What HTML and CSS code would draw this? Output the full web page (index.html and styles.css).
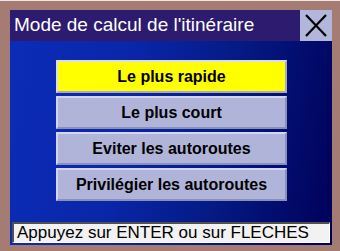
FILE: index.html
```html
<!DOCTYPE html>
<html>
<head>
<meta charset="utf-8">
<link rel="stylesheet" href="styles.css">
</head>
<body>
<div class="frame">
  <div class="titlebar">
    <div class="title">Mode de calcul de l'itinéraire</div>
    <div class="close">
      <svg width="32" height="31" viewBox="0 0 32 31"><path d="M6 5 L26 26 M26 5 L6 26" stroke="#000" stroke-width="2.2" fill="none"/></svg>
    </div>
  </div>
  <div class="panel">
    <div class="menu">
      <div class="btn selected">Le plus rapide</div>
      <div class="btn">Le plus court</div>
      <div class="btn">Eviter les autoroutes</div>
      <div class="btn">Privilégier les autoroutes</div>
    </div>
    <div class="status">Appuyez sur ENTER ou sur FLECHES</div>
  </div>
</div>
</body>
</html>
```
FILE: styles.css
```css
html, body {
  margin: 0;
  padding: 0;
}
body {
  width: 340px;
  height: 251px;
  background: #a57c74;
  font-family: "Liberation Sans", Arial, sans-serif;
  overflow: hidden;
}
.frame {
  padding: 9px 8px 6px 10px;
  border-top: 1px solid #efe6e4;
  box-sizing: border-box;
  height: 251px;
  display: flex;
  flex-direction: column;
}
.titlebar {
  height: 31px;
  background: #2c1b6e;
  display: flex;
  align-items: center;
  flex: none;
}
.title {
  flex: 1;
  color: #fff;
  font-size: 19px;
  padding-left: 4px;
  padding-bottom: 1px;
  white-space: nowrap;
}
.close {
  width: 32px;
  height: 31px;
  background: #b2b6da;
  display: flex;
}
.panel {
  flex: 1;
  background: linear-gradient(100deg, #0c2cb8 0%, #0a26a8 35%, #041a84 65%, #000058 100%);
  display: flex;
  flex-direction: column;
  padding: 19px 2px 2px 2px;
}
.menu {
  display: flex;
  flex-direction: column;
  gap: 3px;
  margin-left: 44px;
  width: 231px;
}
.btn {
  height: 33px;
  box-sizing: border-box;
  background: #b0b4d8;
  border-top: 2px solid #d2d6f2;
  border-left: 2px solid #d2d6f2;
  border-bottom: 2px solid #8a90bc;
  border-right: 2px solid #8a90bc;
  display: flex;
  align-items: center;
  justify-content: center;
  font-weight: bold;
  font-size: 16px;
  color: #000;
  white-space: nowrap;
}
.btn.selected {
  background: #ffff00;
  border-top-color: #dcdcf0;
  border-left-color: #dcdcf0;
  border-bottom-color: #a8a8c8;
  border-right-color: #a8a8c8;
}
.status {
  margin-top: auto;
  height: 21px;
  box-sizing: border-box;
  background: #f2f2f2;
  border-top: 2px solid #505050;
  border-left: 2px solid #505050;
  border-bottom: 1px solid #ffffff;
  border-right: 1px solid #ffffff;
  font-size: 17px;
  line-height: 18px;
  padding-left: 3px;
  color: #000;
  white-space: nowrap;
}
```
